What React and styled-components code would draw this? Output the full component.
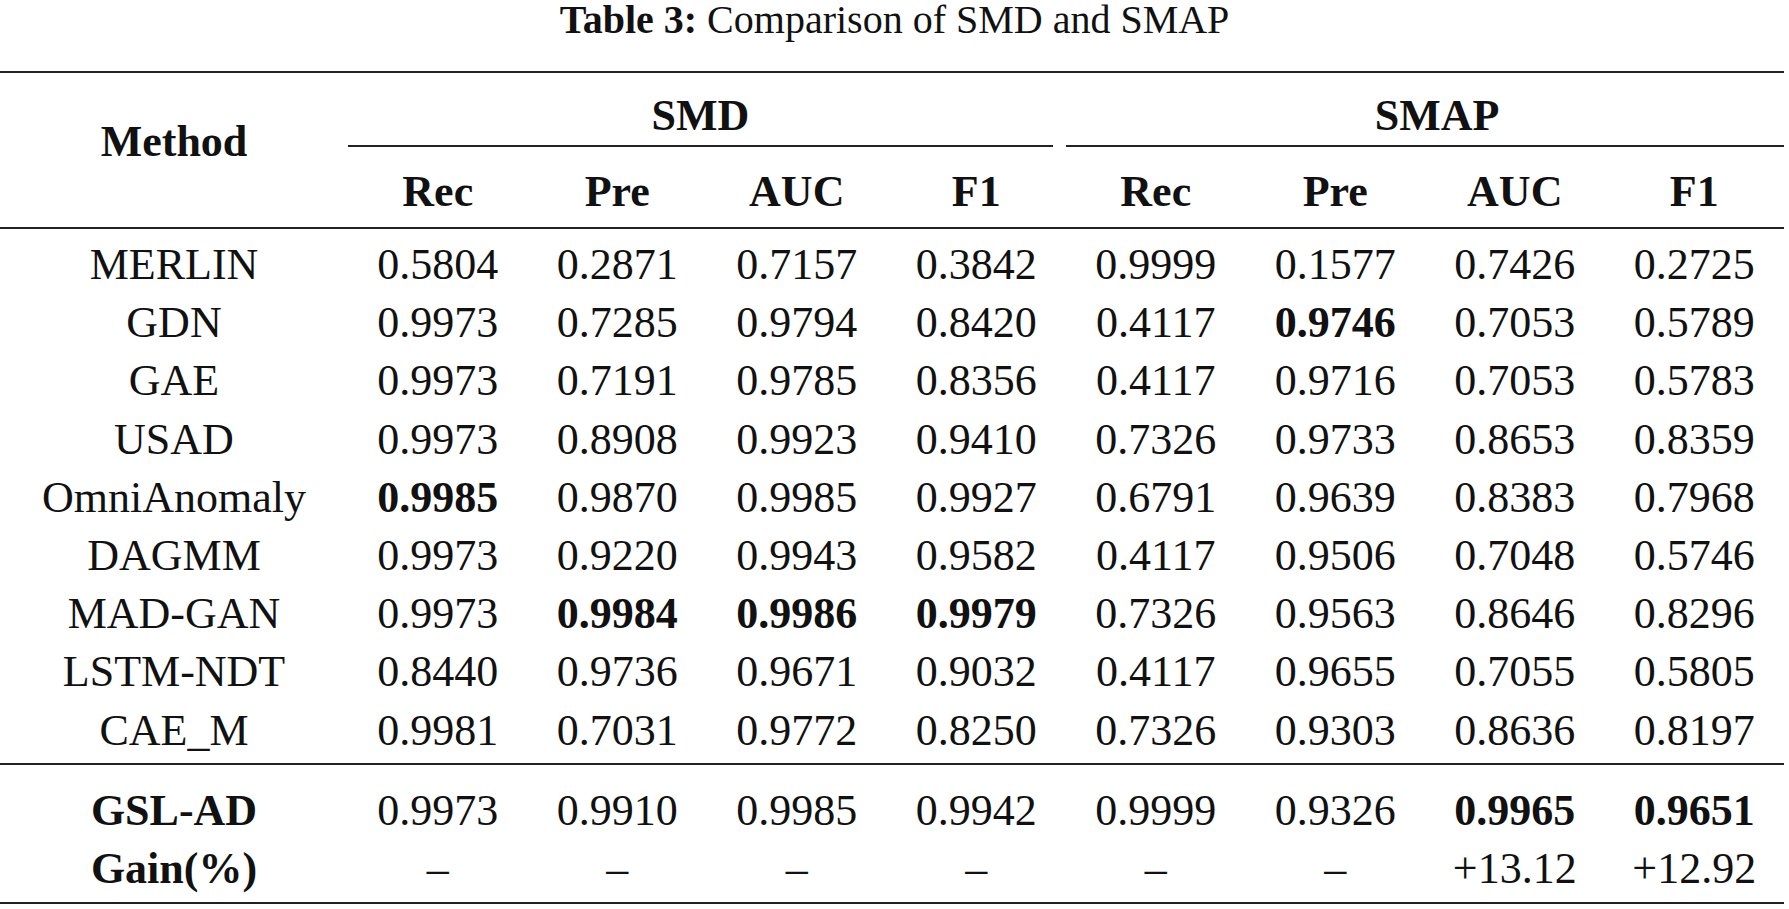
import styled, { createGlobalStyle } from "styled-components";

const GlobalStyle = createGlobalStyle`
  html, body {
    margin: 0;
    padding: 0;
    background: #fff;
  }
  body {
    font-family: "Liberation Serif", "Times New Roman", serif;
    color: #111;
  }
`;

const Page = styled.div`
  width: 1789px;
  display: flex;
  flex-direction: column;
`;

const Caption = styled.div`
  height: 40px;
  line-height: 40px;
  font-size: 40px;
  text-align: center;
  margin-bottom: 31px;

  b {
    font-weight: 700;
  }
`;

const Table = styled.table`
  width: 1784px;
  table-layout: fixed;
  border-collapse: separate;
  border-spacing: 0;
  border-top: 2px solid #222;
  border-bottom: 2px solid #222;
  font-size: 44px;
  text-align: center;
`;

const Head = styled.th`
  font-weight: 700;
  padding: 0;
  line-height: 44px;
  vertical-align: top;
`;

const MethodHead = styled(Head)`
  padding-top: 47px;
  border-bottom: 2px solid #222;
`;

const GroupHead = styled(Head)`
  padding-top: 21px;
`;

const GroupLabel = styled.div`
  border-bottom: 2px solid #222;
  padding-bottom: 7px;
  margin-right: ${({ $trim }) => $trim || 0}px;
  padding-left: ${({ $shift }) => $shift || 0}px;
`;

const SubHead = styled(Head)`
  padding: 23px 0 13px;
  border-bottom: 2px solid #222;
`;

const Cell = styled.td`
  padding: 0;
  line-height: 58.2px;
  font-weight: ${({ $bold }) => ($bold ? 700 : 400)};
  white-space: nowrap;
`;

const Body = styled.tbody`
  tr:first-child td {
    padding-top: 7px;
  }
  tr:last-child td {
    padding-bottom: 3px;
  }
`;

const Summary = styled.tbody`
  tr:first-child td {
    border-top: 2px solid #222;
    padding-top: 17px;
  }
  tr:last-child td {
    padding-bottom: 4px;
  }
`;

const metrics = ["Rec", "Pre", "AUC", "F1"];

const rows = [
  ["MERLIN", "0.5804", "0.2871", "0.7157", "0.3842", "0.9999", "0.1577", "0.7426", "0.2725"],
  ["GDN", "0.9973", "0.7285", "0.9794", "0.8420", "0.4117", "*0.9746", "0.7053", "0.5789"],
  ["GAE", "0.9973", "0.7191", "0.9785", "0.8356", "0.4117", "0.9716", "0.7053", "0.5783"],
  ["USAD", "0.9973", "0.8908", "0.9923", "0.9410", "0.7326", "0.9733", "0.8653", "0.8359"],
  ["OmniAnomaly", "*0.9985", "0.9870", "0.9985", "0.9927", "0.6791", "0.9639", "0.8383", "0.7968"],
  ["DAGMM", "0.9973", "0.9220", "0.9943", "0.9582", "0.4117", "0.9506", "0.7048", "0.5746"],
  ["MAD-GAN", "0.9973", "*0.9984", "*0.9986", "*0.9979", "0.7326", "0.9563", "0.8646", "0.8296"],
  ["LSTM-NDT", "0.8440", "0.9736", "0.9671", "0.9032", "0.4117", "0.9655", "0.7055", "0.5805"],
  ["CAE_M", "0.9981", "0.7031", "0.9772", "0.8250", "0.7326", "0.9303", "0.8636", "0.8197"],
];

const summary = [
  ["*GSL-AD", "0.9973", "0.9910", "0.9985", "0.9942", "0.9999", "0.9326", "*0.9965", "*0.9651"],
  ["*Gain(%)", "–", "–", "–", "–", "–", "–", "+13.12", "+12.92"],
];

const Row = ({ values }) => (
  <tr>
    {values.map((v, i) => {
      const bold = v.startsWith("*");
      return (
        <Cell key={i} $bold={bold}>
          {bold ? v.slice(1) : v}
        </Cell>
      );
    })}
  </tr>
);

export default function App() {
  return (
    <Page>
      <GlobalStyle />
      <Caption>
        <b>Table 3:</b> Comparison of SMD and SMAP
      </Caption>
      <Table>
        <colgroup>
          <col style={{ width: 348 }} />
          {Array.from({ length: 8 }).map((_, i) => (
            <col key={i} />
          ))}
        </colgroup>
        <thead>
          <tr>
            <MethodHead rowSpan={2}>Method</MethodHead>
            <GroupHead colSpan={4}>
              <GroupLabel $trim={13}>SMD</GroupLabel>
            </GroupHead>
            <GroupHead colSpan={4}>
              <GroupLabel $shift={24}>SMAP</GroupLabel>
            </GroupHead>
          </tr>
          <tr>
            {[...metrics, ...metrics].map((m, i) => (
              <SubHead key={i}>{m}</SubHead>
            ))}
          </tr>
        </thead>
        <Body>
          {rows.map((r) => (
            <Row key={r[0]} values={r} />
          ))}
        </Body>
        <Summary>
          {summary.map((r) => (
            <Row key={r[0]} values={r} />
          ))}
        </Summary>
      </Table>
    </Page>
  );
}
